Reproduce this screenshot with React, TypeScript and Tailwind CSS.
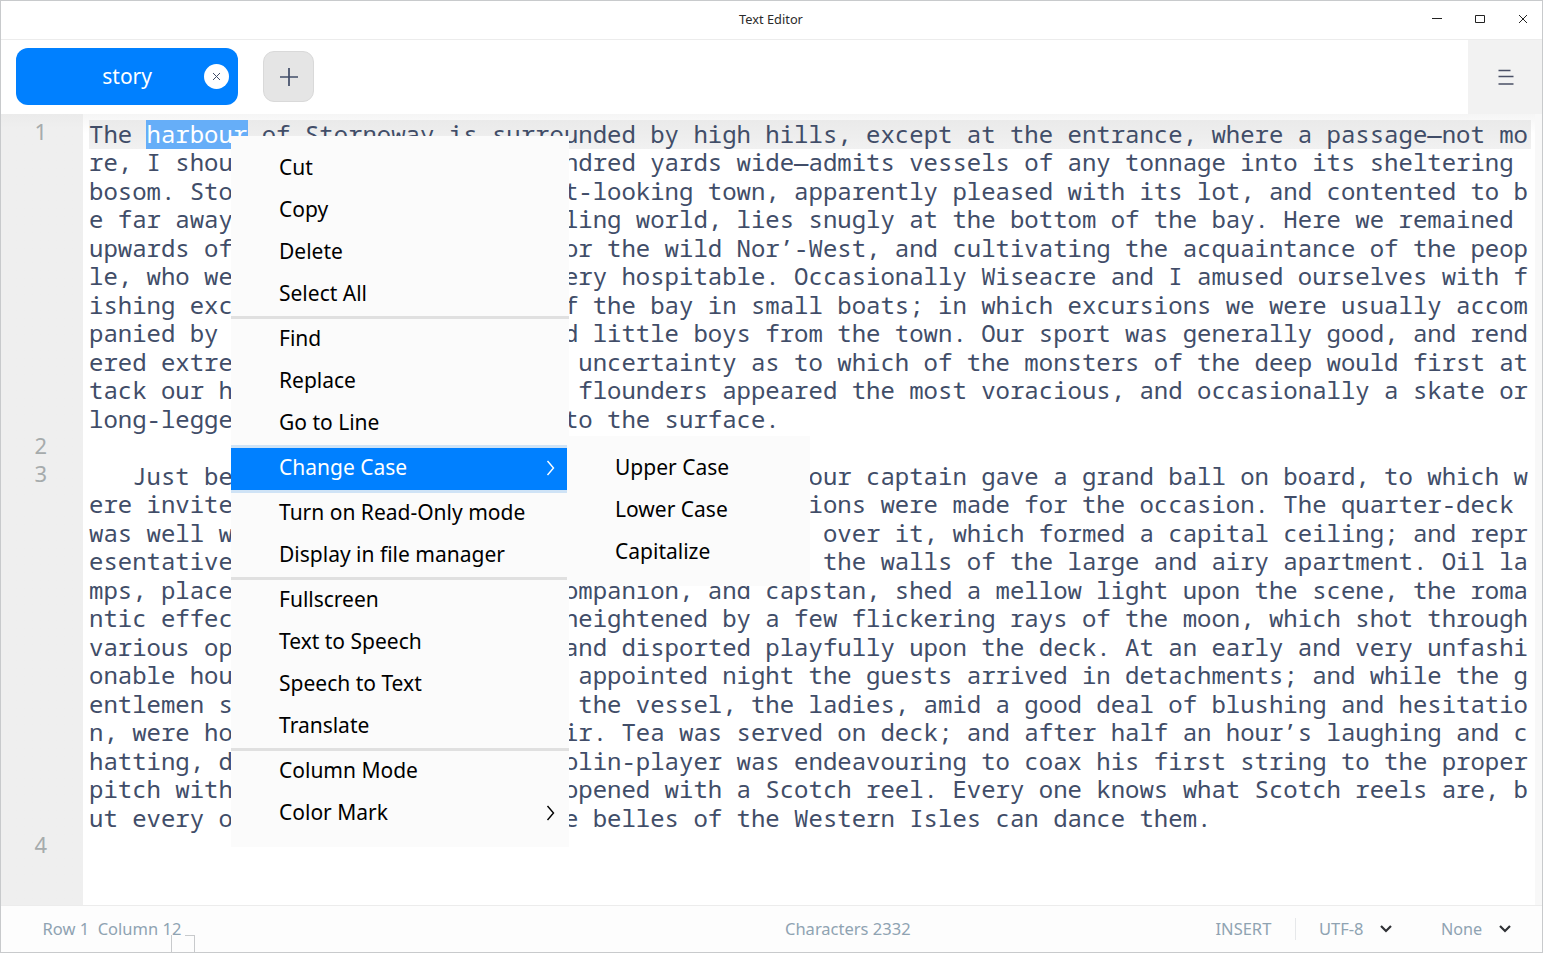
import { useState } from "react";

// Each row holds the characters left of the open menu, the column where the
// text resumes on its other side, and the remainder of the row.
type Row = { n?: number; head: string; at?: number; tail?: string };

const ROWS: Row[] = [
  { n: 1, head: "The harbour of Stornoway is surrounded by high hills, except at the entrance, where a passage—not mo" },
  { head: "re, I shou", at: 33, tail: "ndred yards wide—admits vessels of any tonnage into its sheltering " },
  { head: "bosom. Sto", at: 33, tail: "t-looking town, apparently pleased with its lot, and contented to b" },
  { head: "e far away", at: 33, tail: "ling world, lies snugly at the bottom of the bay. Here we remained " },
  { head: "upwards of", at: 33, tail: "or the wild Nor’-West, and cultivating the acquaintance of the peop" },
  { head: "le, who we", at: 33, tail: "ery hospitable. Occasionally Wiseacre and I amused ourselves with f" },
  { head: "ishing exc", at: 33, tail: "f the bay in small boats; in which excursions we were usually accom" },
  { head: "panied by ", at: 33, tail: "d little boys from the town. Our sport was generally good, and rend" },
  { head: "ered extre", at: 34, tail: "uncertainty as to which of the monsters of the deep would first at" },
  { head: "tack our h", at: 34, tail: "flounders appeared the most voracious, and occasionally a skate or" },
  { head: "long-legge", at: 33, tail: "to the surface." },
  { n: 2, head: "" },
  { n: 3, head: "   Just be", at: 50, tail: "our captain gave a grand ball on board, to which w" },
  { head: "ere invite", at: 50, tail: "ions were made for the occasion. The quarter-deck " },
  { head: "was well w", at: 51, tail: "over it, which formed a capital ceiling; and repr" },
  { head: "esentative", at: 51, tail: "the walls of the large and airy apartment. Oil la" },
  { head: "mps, place", at: 33, tail: "ompanion, and capstan, shed a mellow light upon the scene, the roma" },
  { head: "ntic effec", at: 33, tail: "heightened by a few flickering rays of the moon, which shot through" },
  { head: "various op", at: 33, tail: "and disported playfully upon the deck. At an early and very unfashi" },
  { head: "onable hou", at: 34, tail: "appointed night the guests arrived in detachments; and while the g" },
  { head: "entlemen s", at: 34, tail: "the vessel, the ladies, amid a good deal of blushing and hesitatio" },
  { head: "n, were ho", at: 33, tail: "ir. Tea was served on deck; and after half an hour’s laughing and c" },
  { head: "hatting, d", at: 33, tail: "olin-player was endeavouring to coax his first string to the proper" },
  { head: "pitch with", at: 33, tail: "opened with a Scotch reel. Every one knows what Scotch reels are, b" },
  { head: "ut every o", at: 33, tail: "e belles of the Western Isles can dance them." },
  { n: 4, head: "" },
];

const MENU: { label: string; submenu?: boolean }[][] = [
  [{ label: "Cut" }, { label: "Copy" }, { label: "Delete" }, { label: "Select All" }],
  [{ label: "Find" }, { label: "Replace" }, { label: "Go to Line" }],
  [{ label: "Change Case", submenu: true }],
  [{ label: "Turn on Read-Only mode" }, { label: "Display in file manager" }],
  [{ label: "Fullscreen" }, { label: "Text to Speech" }, { label: "Speech to Text" }, { label: "Translate" }],
  [{ label: "Column Mode" }, { label: "Color Mark", submenu: true }],
];

function TitleBar() {
  return (
    <header className="relative flex h-[39px] shrink-0 items-center justify-center border-b border-[#ececec] bg-white">
      <h1 className="mb-[2px] mr-px text-[12.8px] leading-4 text-[#2b2b2b]">Text Editor</h1>
      <div className="absolute right-[11px] top-[10px] flex gap-[27px] text-[#222]">
        <svg width="16" height="16" viewBox="0 0 16 16" fill="none" stroke="currentColor" strokeWidth="1">
          <path d="M3 7.5h10" />
        </svg>
        <svg width="16" height="16" viewBox="0 0 16 16" fill="none" stroke="currentColor" strokeWidth="1">
          <path d="M3.5 4.5h9v7h-9z" />
        </svg>
        <svg width="16" height="16" viewBox="0 0 16 16" fill="none" stroke="currentColor" strokeWidth="1">
          <path d="M4 4l8 8M12 4l-8 8" />
        </svg>
      </div>
    </header>
  );
}

function TabBar() {
  return (
    <div className="flex h-[74px] shrink-0 items-start bg-white pl-[14.5px]">
      <div className="mt-[8px] flex h-[57px] w-[222px] items-center justify-end rounded-[12px] bg-[#0080ff] pr-[8.5px] text-white">
        <span className="mb-[2px] mr-[52px] text-[21px] leading-7">story</span>
        <button className="flex size-[25px] items-center justify-center rounded-full bg-white text-[#414d68]">
          <svg width="9" height="9" viewBox="0 0 9 9" stroke="currentColor" strokeWidth="1">
            <path d="M1 1l7 7M8 1l-7 7" />
          </svg>
        </button>
      </div>
      <button className="ml-[25.5px] mt-[11px] flex size-[51px] items-center justify-center rounded-[11px] border border-[#d9d9d9] bg-[#e5e5e5] text-[#414d68]">
        <svg className="ml-px mt-px" width="18" height="18" viewBox="0 0 18 18" stroke="currentColor" strokeWidth="1.7">
          <path d="M0 9h18M9 0v18" />
        </svg>
      </button>
      <button className="ml-auto flex h-full w-[74px] items-center justify-center bg-[#f2f2f2] pl-[2px] text-[#4a5066]">
        <svg width="16" height="18" viewBox="0 0 16 18" stroke="currentColor" strokeWidth="1.3">
          <path d="M.5 2.5h12M.5 8.5h15M.5 16h15" />
        </svg>
      </button>
    </div>
  );
}

function LineText({ text, selection }: { text: string; selection?: [number, number] }) {
  if (!selection) return <>{text}</>;
  const [from, to] = selection;
  return (
    <>
      {text.slice(0, from)}
      <span className="inline-block h-[29px] bg-[#66aef8] align-top text-white shadow-[-1px_0_0_#66aef8,1px_0_0_#66aef8]">
        {text.slice(from, to)}
      </span>
      {text.slice(to)}
    </>
  );
}

function Editor() {
  return (
    <main className="flex h-[791px] shrink-0 bg-white">
      <div className="w-[82px] shrink-0 bg-gradient-to-b from-[#ebebeb] to-[#efefef] to-[14px] pt-[3.25px]">
        {ROWS.map((row, i) => (
          <div key={i} className="h-[28.5px] pr-[36px] text-right text-[22px] leading-[28.5px] text-[#a6abac]">
            {row.n}
          </div>
        ))}
      </div>
      <div className="w-[1452px] bg-gradient-to-b from-[#f5f5f5] to-white to-[20px] pl-[6px] pt-[5.75px] font-['Noto_Sans_Mono','DejaVu_Sans_Mono',monospace] text-[24px] tracking-[-0.01px] text-[#414d68]">
        {ROWS.map((row, i) =>
          i === 0 ? (
            <div
              key={i}
              className="-mb-[0.5px] h-[29px] w-[1442px] whitespace-pre bg-gradient-to-b from-[#eaeaea] to-[#f1f1f1] leading-[28.5px]"
            >
              <LineText text={row.head} selection={[4, 11]} />
            </div>
          ) : (
            <div key={i} className="flex h-[28.5px] w-[1442px] whitespace-pre leading-[28.5px]">
              <span>{row.head}</span>
              {row.tail && (
                <span style={{ marginLeft: (row.at! - row.head.length) * 14.39 }}>{row.tail}</span>
              )}
            </div>
          ),
        )}
      </div>
      <div className="flex-1 bg-[#f8f8f8]" />
    </main>
  );
}

function Caret() {
  return (
    <svg className="mb-px" width="12" height="8" viewBox="0 0 12 8" fill="none" stroke="#303236" strokeWidth="2.2">
      <path d="M1 1l5 5L11 1" />
    </svg>
  );
}

function StatusBar() {
  return (
    <footer className="relative flex h-[47px] shrink-0 items-center border-t border-[#ececec] bg-[#fdfdfd] text-[16.5px] leading-6 text-[#8fa3b2]">
      <span className="ml-[41.5px] w-[742.5px] whitespace-pre">Row 1  Column 12</span>
      <span className="w-[430.5px]">Characters 2332</span>
      <span className="w-[79.5px]">INSERT</span>
      <span className="mr-[23px] h-[22px] w-px bg-[#e6e8ea]" />
      <span className="w-[61px]">UTF-8</span>
      <Caret />
      <span className="ml-[49px] w-[58px] text-[16.2px]">None</span>
      <Caret />
      <div className="absolute bottom-0 left-[170px] h-[17px] w-[24px] border-r border-l border-[#c8cacc]" />
      <div className="absolute bottom-[16px] left-[184px] h-px w-[10px] bg-[#c8cacc]" />
    </footer>
  );
}

function ContextMenu() {
  const [active] = useState("Change Case");
  return (
    <nav className="absolute left-[231px] top-[136px] h-[711px] w-[338px] bg-[#fbfbfb] pt-[12px] text-[21px] text-black">
      {MENU.map((group, g) => (
        <div key={g}>
          {g > 0 && (
            <div
              className={
                g === 2 || g === 3
                  ? "h-[3px] w-[336px] bg-[#cfe3f6]"
                  : g === 4
                    ? "h-[3px] w-[336px] bg-[#e0e0e0]"
                    : "h-[3px] bg-[#e0e0e0]"
              }
            />
          )}
          {group.map((item) => (
            <div
              key={item.label}
              className={
                item.label === active
                  ? "flex h-[42px] w-[336px] items-start justify-between bg-[#0080ff] pl-[48px] pr-[12px] text-white"
                  : "flex h-[42px] w-[336px] items-start justify-between pl-[48px] pr-[12px]"
              }
            >
              <span className="leading-[38px]">{item.label}</span>
              {item.submenu && (
                <svg
                  className="mt-[12px]"
                  width="9"
                  height="16"
                  viewBox="0 0 9 16"
                  fill="none"
                  stroke="currentColor"
                  strokeWidth="1.4"
                >
                  <path d="M1.5 1L7.5 8l-6 7" />
                </svg>
              )}
            </div>
          ))}
        </div>
      ))}
    </nav>
  );
}

function SubMenu() {
  return (
    <nav className="absolute left-[567px] top-[436px] h-[150px] w-[243px] bg-[#fbfbfb] pt-[11px] text-[21px] text-black">
      {["Upper Case", "Lower Case", "Capitalize"].map((label) => (
        <div key={label} className="h-[42px] pl-[48px] leading-[40px]">
          {label}
        </div>
      ))}
    </nav>
  );
}

export default function App() {
  return (
    <div className="relative flex h-[953px] w-[1543px] flex-col overflow-hidden border border-[#c8cacc] bg-white font-['Noto_Sans',sans-serif]">
      <TitleBar />
      <TabBar />
      <Editor />
      <StatusBar />
      <div className="absolute -left-px -top-px">
        <SubMenu />
        <ContextMenu />
      </div>
    </div>
  );
}
